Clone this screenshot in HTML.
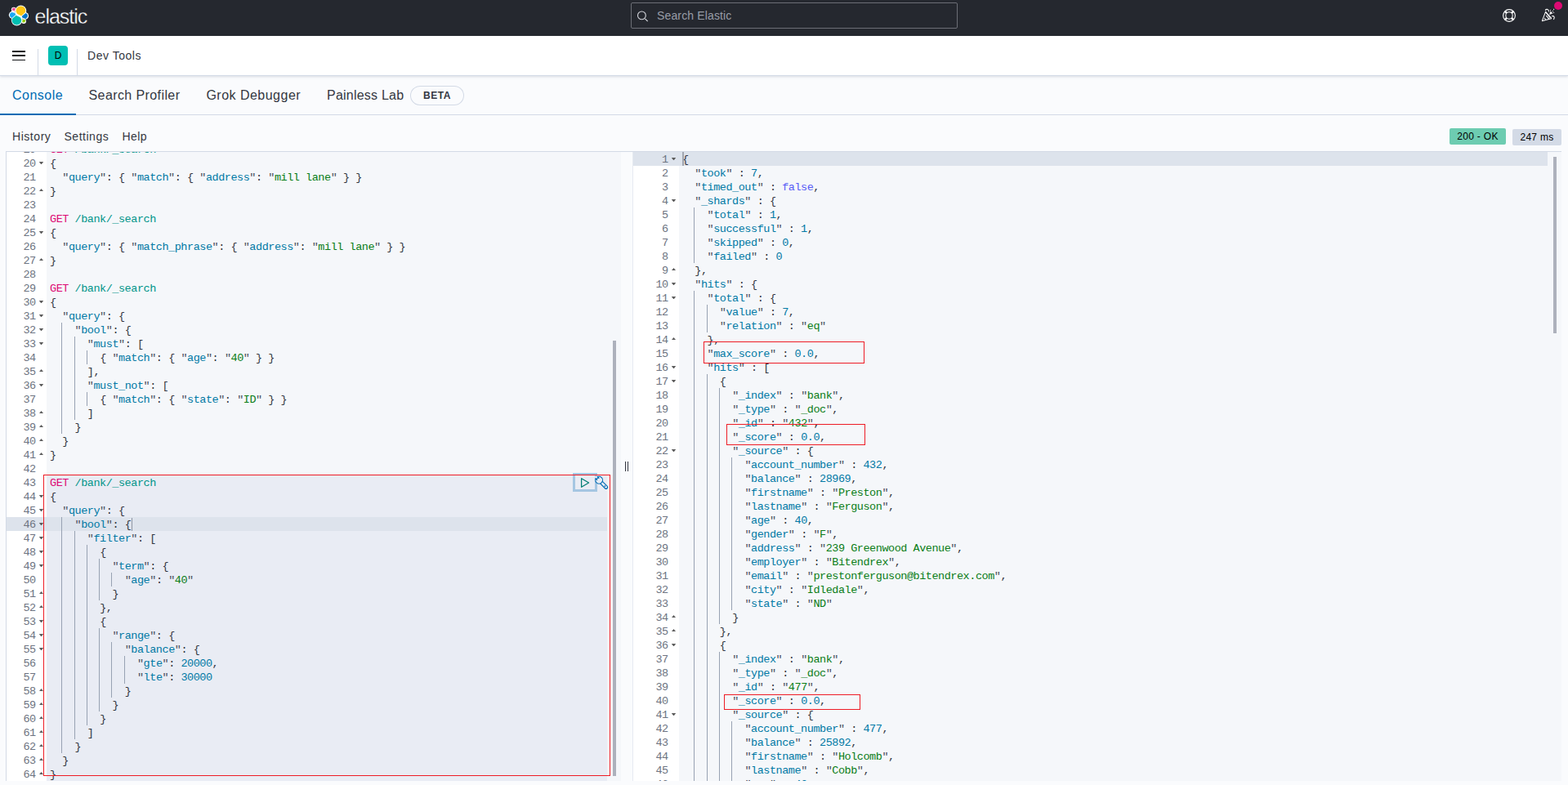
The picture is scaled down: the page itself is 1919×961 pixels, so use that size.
<!DOCTYPE html>
<html lang="en">
<head>
<meta charset="utf-8">
<title>Dev Tools - Console - Elastic</title>
<style>
*{box-sizing:border-box;margin:0;padding:0}
html,body{width:1919px;height:961px;overflow:hidden;background:#fafbfd}
body{position:relative;font-family:"Liberation Sans",sans-serif;color:#343741;font-size:14px}
.abs{position:absolute}
/* top dark header */
.hdr{position:absolute;left:0;top:0;width:1919px;height:44px;background:#25282f}
.logo{position:absolute;left:0;top:0}
.wordmark{position:absolute;left:42.6px;top:5px;height:30px;line-height:30px;font-size:25px;letter-spacing:-1.05px;color:#fff;white-space:nowrap;-webkit-text-stroke:.35px #25282f}
.search{position:absolute;left:772px;top:3px;width:400px;height:32px;border:1px solid #6c6e76;border-radius:2px;background:#25282f}
.search svg{position:absolute;left:6px;top:8px}
.search span{position:absolute;left:31px;top:0;height:30px;line-height:30px;font-size:14px;letter-spacing:.14px;color:#989da8;white-space:nowrap}
.hicon{position:absolute}
.dot{position:absolute;left:1901.7px;top:1.6px;width:10.6px;height:10.6px;border-radius:50%;background:#dd0a73}
/* second bar */
.bar{position:absolute;left:0;top:44px;width:1919px;height:48px;background:#fff;box-shadow:0 1px 0 #d3dae6,0 2px 3px rgba(152,162,179,.35)}
.bar .sep{position:absolute;top:16px;width:1px;height:32px;background:#d3dae6}
.burger{position:absolute;left:15px;top:17px;width:16px;height:14px}
.burger i{position:absolute;left:0;width:16px;height:1.55px;background:#111317}
.avatar{position:absolute;left:59px;top:12px;width:24px;height:24px;border-radius:4px;background:#00bfb3;color:#000;font-size:12px;line-height:24px;text-align:center;font-weight:500}
.crumb{position:absolute;left:107px;top:12px;height:24px;line-height:24px;font-size:14px;letter-spacing:.53px;color:#343741;white-space:nowrap}
/* tabs */
.tabs{position:absolute;left:0;top:93px;width:1919px;height:48px;border-bottom:1px solid #d3dae6}
.tab{position:absolute;top:0;height:48px;line-height:47px;font-size:16px;color:#343741;white-space:nowrap}
.tab.sel{color:#006bb4}
.tabsel{position:absolute;left:0;top:46px;width:93px;height:2px;background:#006bb4}
.beta{position:absolute;left:502px;top:12px;width:66px;height:24px;border-radius:12px;box-shadow:inset 0 0 0 1px #d3dae6;font-size:12px;font-weight:700;letter-spacing:.5px;line-height:24px;text-align:center;color:#343741;padding-left:0}
/* toolbar */
.tool{position:absolute;top:156px;height:22px;line-height:22px;font-size:14px;color:#343741;white-space:nowrap}
.badge{position:absolute;height:20px;line-height:20px;font-size:12px;border-radius:2px;text-align:center;color:#000;white-space:nowrap;letter-spacing:.3px}
/* editors */
.edtop{position:absolute;left:7px;top:185px;width:1904px;height:1px;background:#d3dae6}
.ed{position:absolute;top:186px;height:770px;overflow:hidden;background:#f5f7fa;font-family:"Liberation Mono","DejaVu Sans Mono",monospace;font-size:13.5px;letter-spacing:-.4676px;line-height:17px;color:#343741}
.ed .gut{position:absolute;left:0;top:0;height:770px;background:#fff;color:#6d7481}
.ed .code{position:absolute;top:0;height:770px;overflow:hidden}
.gl{position:absolute;left:0;width:100%;height:17px}
.gl .ln{position:absolute;right:13.3px;top:1px;height:17px;white-space:pre}
.gl i{position:absolute;right:3.6px;width:5.8px;height:3.6px;background:#5c5c5c}
.gl i.fo{top:6.8px;clip-path:polygon(0 0,100% 0,50% 100%)}
.gl i.fc{top:5.9px;clip-path:polygon(0 100%,100% 100%,50% 0)}
.cl{position:absolute;left:0;width:100%;height:17px;padding:1px 0 0 4px;white-space:pre}
.act{background:#dde3ec}
.ig{background:linear-gradient(#98a2b3,#98a2b3) no-repeat right top/1px 100%}
.ig,.ng{display:inline-block;height:17px;vertical-align:top;position:relative;top:-1px}
.q{color:#4a4f5c}.m{color:#dd0a73}.u{color:#01958a}.k{color:#0079a5}.s{color:#0a7d17}.n{color:#0079a5}.b{color:#585cf6}
.sb{position:absolute;width:4px;background:#adb1bc}
.hl{position:absolute;background:#e9ecf4}
.red{position:absolute;border:1px solid #ee1c25;pointer-events:none}
.grip{position:absolute;left:765px;top:565px;width:4.4px;height:12px;border-left:1.3px solid #343741;border-right:1.3px solid #343741}
.runbox{position:absolute;left:701px;top:579px;width:30px;height:23px;border:3px solid #a5c6e2}
</style>
</head>
<body>
<div class="hdr">
  <svg class="logo" width="48" height="44" viewBox="0 0 48 44" aria-label="Elastic logo">
    <g fill="#fff"><circle cx="25.5" cy="13.3" r="6.75"/><circle cx="20.5" cy="24.7" r="6.7"/><circle cx="16.9" cy="11.9" r="3.05"/><circle cx="15.3" cy="18.3" r="4.45"/><circle cx="30.6" cy="19.4" r="4.45"/><circle cx="29" cy="26" r="3.05"/><circle cx="23" cy="19" r="6"/></g>
    <path fill="#fec514" d="M25.5 7.4a5.9 5.9 0 0 1 5.6 7.7l-5 4.3-5-2.3-1.4-2.6a5.9 5.9 0 0 1 5.8-7.1z"/>
    <path fill="#00bfb3" d="M20.5 30.6a5.9 5.9 0 0 1-5.7-7.5l4.9-4.3 5.1 2.4 1.4 2.5a5.9 5.9 0 0 1-5.7 6.9z"/>
    <path fill="#f04e98" d="M14.9 12.6a2.3 2.3 0 0 1 3.9-2.3l-.5 3.3z"/>
    <path fill="#1ba9f5" d="M14.6 14.9l3.7 1 1 2.1-4.5 3.9a3.6 3.6 0 0 1-.2-7z"/>
    <path fill="#0077cc" d="M31.4 15.9a3.7 3.7 0 0 1 .1 7l-3.7-.9-1.1-2.1z"/>
    <path fill="#93c90e" d="M27.700 23.6l3.400.8a2.300 2.300 0 0 1-3.900 2.300z"/>
  </svg>
  <div class="wordmark">elastic</div>
  <div class="search">
    <svg width="16" height="16" viewBox="0 0 16 16"><circle cx="6.4" cy="6.9" r="4.9" fill="none" stroke="#d4d6dc" stroke-width="1.1"/><path d="M10.4 10.8l3.3 3.4" stroke="#d4d6dc" stroke-width="1.2" fill="none"/></svg>
    <span>Search Elastic</span>
  </div>
  <svg class="hicon" style="left:1839px;top:11px" width="16" height="16" viewBox="0 0 16 16" fill="none" stroke="#fff" stroke-width="1.1"><circle cx="8" cy="8" r="7.4"/><circle cx="8" cy="8" r="4.2"/><path d="M2.6 2.6l2.5 2.5M13.4 2.6l-2.5 2.5M2.6 13.4l2.5-2.5M13.4 13.4l-2.5-2.5" stroke-width="2.6"/></svg>
  <svg class="hicon" style="left:1880px;top:0" width="39" height="30" viewBox="0 0 39 30" fill="none" stroke="#fff" stroke-width="1.05" stroke-linejoin="round" stroke-linecap="round"><path d="M11.6 14.4L7.5 25.1Q7.3 25.8 8 25.6L18.3 22.8Q18.9 22.5 18.5 22z"/><path d="M12.5 19.3l3.3 3.9M10.4 22.3l1 1.2M12.6 16.2l4.6 5.6"/><path d="M11.4 12.4c1.2-1.7 4-1.3 4.1 1.5"/><path d="M17.6 14.3l-1 3.2 3.2-1.2z" fill="#fff" stroke-width=".6"/><path d="M19.6 19.8c2-.6 3.6.9 2 3.8"/><g fill="#fff" stroke="none"><circle cx="17.5" cy="12.5" r=".6"/><circle cx="21.6" cy="11.4" r=".6"/><circle cx="20.5" cy="13.6" r=".6"/><circle cx="21.6" cy="15.5" r=".6"/></g></svg>
  <div class="dot"></div>
</div>
<div class="bar">
  <div class="burger"><i style="top:1.2px"></i><i style="top:6.45px"></i><i style="top:11.5px"></i></div>
  <div class="sep" style="left:46px"></div>
  <div class="avatar">D</div>
  <div class="sep" style="left:94px"></div>
  <div class="crumb">Dev Tools</div>
</div>
<div class="tabs">
  <div class="tab sel" style="left:15px;letter-spacing:.48px">Console</div>
  <div class="tab" style="left:108.5px;letter-spacing:.405px">Search Profiler</div>
  <div class="tab" style="left:252.4px;letter-spacing:.485px">Grok Debugger</div>
  <div class="tab" style="left:400px;letter-spacing:.22px">Painless Lab</div>
  <div class="beta">BETA</div>
  <div class="tabsel"></div>
</div>
<div class="tool" style="left:15px;letter-spacing:.55px">History</div>
<div class="tool" style="left:78.5px;letter-spacing:.52px">Settings</div>
<div class="tool" style="left:149.5px;letter-spacing:.4px">Help</div>
<div class="badge" style="left:1774px;top:157px;width:69px;background:#6dccb1">200 - OK</div>
<div class="badge" style="left:1851px;top:158px;width:60px;background:#d3dae6">247 ms</div>

<div class="edtop"></div>
<!-- request editor -->
<div class="ed" style="left:7px;width:753px;border-left:1px solid #d3dae6">
  <div class="hl" style="left:49px;top:396px;width:686px;height:374px"></div>
  <div class="gut" style="width:49px">
<div class="gl" style="top:-12px"><span class="ln">19</span></div>
<div class="gl" style="top:5px"><span class="ln">20</span><i class="fo"></i></div>
<div class="gl" style="top:22px"><span class="ln">21</span></div>
<div class="gl" style="top:39px"><span class="ln">22</span><i class="fc"></i></div>
<div class="gl" style="top:56px"><span class="ln">23</span></div>
<div class="gl" style="top:73px"><span class="ln">24</span></div>
<div class="gl" style="top:90px"><span class="ln">25</span><i class="fo"></i></div>
<div class="gl" style="top:107px"><span class="ln">26</span></div>
<div class="gl" style="top:124px"><span class="ln">27</span><i class="fc"></i></div>
<div class="gl" style="top:141px"><span class="ln">28</span></div>
<div class="gl" style="top:158px"><span class="ln">29</span></div>
<div class="gl" style="top:175px"><span class="ln">30</span><i class="fo"></i></div>
<div class="gl" style="top:192px"><span class="ln">31</span><i class="fo"></i></div>
<div class="gl" style="top:209px"><span class="ln">32</span><i class="fo"></i></div>
<div class="gl" style="top:226px"><span class="ln">33</span><i class="fo"></i></div>
<div class="gl" style="top:243px"><span class="ln">34</span></div>
<div class="gl" style="top:260px"><span class="ln">35</span><i class="fc"></i></div>
<div class="gl" style="top:277px"><span class="ln">36</span><i class="fo"></i></div>
<div class="gl" style="top:294px"><span class="ln">37</span></div>
<div class="gl" style="top:311px"><span class="ln">38</span><i class="fc"></i></div>
<div class="gl" style="top:328px"><span class="ln">39</span><i class="fc"></i></div>
<div class="gl" style="top:345px"><span class="ln">40</span><i class="fc"></i></div>
<div class="gl" style="top:362px"><span class="ln">41</span><i class="fc"></i></div>
<div class="gl" style="top:379px"><span class="ln">42</span></div>
<div class="gl" style="top:396px"><span class="ln">43</span></div>
<div class="gl" style="top:413px"><span class="ln">44</span><i class="fo"></i></div>
<div class="gl" style="top:430px"><span class="ln">45</span><i class="fo"></i></div>
<div class="gl act" style="top:447px"><span class="ln">46</span><i class="fo"></i></div>
<div class="gl" style="top:464px"><span class="ln">47</span><i class="fo"></i></div>
<div class="gl" style="top:481px"><span class="ln">48</span><i class="fo"></i></div>
<div class="gl" style="top:498px"><span class="ln">49</span><i class="fo"></i></div>
<div class="gl" style="top:515px"><span class="ln">50</span></div>
<div class="gl" style="top:532px"><span class="ln">51</span><i class="fc"></i></div>
<div class="gl" style="top:549px"><span class="ln">52</span><i class="fc"></i></div>
<div class="gl" style="top:566px"><span class="ln">53</span><i class="fo"></i></div>
<div class="gl" style="top:583px"><span class="ln">54</span><i class="fo"></i></div>
<div class="gl" style="top:600px"><span class="ln">55</span><i class="fo"></i></div>
<div class="gl" style="top:617px"><span class="ln">56</span></div>
<div class="gl" style="top:634px"><span class="ln">57</span></div>
<div class="gl" style="top:651px"><span class="ln">58</span><i class="fc"></i></div>
<div class="gl" style="top:668px"><span class="ln">59</span><i class="fc"></i></div>
<div class="gl" style="top:685px"><span class="ln">60</span><i class="fc"></i></div>
<div class="gl" style="top:702px"><span class="ln">61</span><i class="fc"></i></div>
<div class="gl" style="top:719px"><span class="ln">62</span><i class="fc"></i></div>
<div class="gl" style="top:736px"><span class="ln">63</span><i class="fc"></i></div>
<div class="gl" style="top:753px"><span class="ln">64</span><i class="fc"></i></div>
  </div>
  <div class="code" style="left:49px;width:686px">
<div class="cl" style="top:-12px"><span class="m">GET</span> <span class="u">/bank/_search</span></div>
<div class="cl" style="top:5px">{</div>
<div class="cl" style="top:22px"><span class="ng">  </span><span class="q">"</span><span class="k">query</span><span class="q">"</span>: { <span class="q">"</span><span class="k">match</span><span class="q">"</span>: { <span class="q">"</span><span class="k">address</span><span class="q">"</span>: <span class="q">"</span><span class="s">mill lane</span><span class="q">"</span> } }</div>
<div class="cl" style="top:39px">}</div>
<div class="cl" style="top:56px"></div>
<div class="cl" style="top:73px"><span class="m">GET</span> <span class="u">/bank/_search</span></div>
<div class="cl" style="top:90px">{</div>
<div class="cl" style="top:107px"><span class="ng">  </span><span class="q">"</span><span class="k">query</span><span class="q">"</span>: { <span class="q">"</span><span class="k">match_phrase</span><span class="q">"</span>: { <span class="q">"</span><span class="k">address</span><span class="q">"</span>: <span class="q">"</span><span class="s">mill lane</span><span class="q">"</span> } }</div>
<div class="cl" style="top:124px">}</div>
<div class="cl" style="top:141px"></div>
<div class="cl" style="top:158px"><span class="m">GET</span> <span class="u">/bank/_search</span></div>
<div class="cl" style="top:175px">{</div>
<div class="cl" style="top:192px"><span class="ng">  </span><span class="q">"</span><span class="k">query</span><span class="q">"</span>: {</div>
<div class="cl" style="top:209px"><span class="ig">  </span><span class="ng">  </span><span class="q">"</span><span class="k">bool</span><span class="q">"</span>: {</div>
<div class="cl" style="top:226px"><span class="ig">  </span><span class="ig">  </span><span class="ng">  </span><span class="q">"</span><span class="k">must</span><span class="q">"</span>: [</div>
<div class="cl" style="top:243px"><span class="ig">  </span><span class="ig">  </span><span class="ig">  </span><span class="ng">  </span>{ <span class="q">"</span><span class="k">match</span><span class="q">"</span>: { <span class="q">"</span><span class="k">age</span><span class="q">"</span>: <span class="q">"</span><span class="s">40</span><span class="q">"</span> } }</div>
<div class="cl" style="top:260px"><span class="ig">  </span><span class="ig">  </span><span class="ng">  </span>],</div>
<div class="cl" style="top:277px"><span class="ig">  </span><span class="ig">  </span><span class="ng">  </span><span class="q">"</span><span class="k">must_not</span><span class="q">"</span>: [</div>
<div class="cl" style="top:294px"><span class="ig">  </span><span class="ig">  </span><span class="ig">  </span><span class="ng">  </span>{ <span class="q">"</span><span class="k">match</span><span class="q">"</span>: { <span class="q">"</span><span class="k">state</span><span class="q">"</span>: <span class="q">"</span><span class="s">ID</span><span class="q">"</span> } }</div>
<div class="cl" style="top:311px"><span class="ig">  </span><span class="ig">  </span><span class="ng">  </span>]</div>
<div class="cl" style="top:328px"><span class="ig">  </span><span class="ng">  </span>}</div>
<div class="cl" style="top:345px"><span class="ng">  </span>}</div>
<div class="cl" style="top:362px">}</div>
<div class="cl" style="top:379px"></div>
<div class="cl" style="top:396px"><span class="m">GET</span> <span class="u">/bank/_search</span></div>
<div class="cl" style="top:413px">{</div>
<div class="cl" style="top:430px"><span class="ng">  </span><span class="q">"</span><span class="k">query</span><span class="q">"</span>: {</div>
<div class="cl act" style="top:447px"><span class="ig">  </span><span class="ng">  </span><span class="q">"</span><span class="k">bool</span><span class="q">"</span>: {</div>
<div class="cl" style="top:464px"><span class="ig">  </span><span class="ig">  </span><span class="ng">  </span><span class="q">"</span><span class="k">filter</span><span class="q">"</span>: [</div>
<div class="cl" style="top:481px"><span class="ig">  </span><span class="ig">  </span><span class="ig">  </span><span class="ng">  </span>{</div>
<div class="cl" style="top:498px"><span class="ig">  </span><span class="ig">  </span><span class="ig">  </span><span class="ig">  </span><span class="ng">  </span><span class="q">"</span><span class="k">term</span><span class="q">"</span>: {</div>
<div class="cl" style="top:515px"><span class="ig">  </span><span class="ig">  </span><span class="ig">  </span><span class="ig">  </span><span class="ig">  </span><span class="ng">  </span><span class="q">"</span><span class="k">age</span><span class="q">"</span>: <span class="q">"</span><span class="s">40</span><span class="q">"</span></div>
<div class="cl" style="top:532px"><span class="ig">  </span><span class="ig">  </span><span class="ig">  </span><span class="ig">  </span><span class="ng">  </span>}</div>
<div class="cl" style="top:549px"><span class="ig">  </span><span class="ig">  </span><span class="ig">  </span><span class="ng">  </span>},</div>
<div class="cl" style="top:566px"><span class="ig">  </span><span class="ig">  </span><span class="ig">  </span><span class="ng">  </span>{</div>
<div class="cl" style="top:583px"><span class="ig">  </span><span class="ig">  </span><span class="ig">  </span><span class="ig">  </span><span class="ng">  </span><span class="q">"</span><span class="k">range</span><span class="q">"</span>: {</div>
<div class="cl" style="top:600px"><span class="ig">  </span><span class="ig">  </span><span class="ig">  </span><span class="ig">  </span><span class="ig">  </span><span class="ng">  </span><span class="q">"</span><span class="k">balance</span><span class="q">"</span>: {</div>
<div class="cl" style="top:617px"><span class="ig">  </span><span class="ig">  </span><span class="ig">  </span><span class="ig">  </span><span class="ig">  </span><span class="ig">  </span><span class="ng">  </span><span class="q">"</span><span class="k">gte</span><span class="q">"</span>: <span class="n">20000</span>,</div>
<div class="cl" style="top:634px"><span class="ig">  </span><span class="ig">  </span><span class="ig">  </span><span class="ig">  </span><span class="ig">  </span><span class="ig">  </span><span class="ng">  </span><span class="q">"</span><span class="k">lte</span><span class="q">"</span>: <span class="n">30000</span></div>
<div class="cl" style="top:651px"><span class="ig">  </span><span class="ig">  </span><span class="ig">  </span><span class="ig">  </span><span class="ig">  </span><span class="ng">  </span>}</div>
<div class="cl" style="top:668px"><span class="ig">  </span><span class="ig">  </span><span class="ig">  </span><span class="ig">  </span><span class="ng">  </span>}</div>
<div class="cl" style="top:685px"><span class="ig">  </span><span class="ig">  </span><span class="ig">  </span><span class="ng">  </span>}</div>
<div class="cl" style="top:702px"><span class="ig">  </span><span class="ig">  </span><span class="ng">  </span>]</div>
<div class="cl" style="top:719px"><span class="ig">  </span><span class="ng">  </span>}</div>
<div class="cl" style="top:736px"><span class="ng">  </span>}</div>
<div class="cl" style="top:753px">}</div>
  </div>
  <div class="abs" style="left:152.6px;top:448px;width:1.5px;height:16px;background:#9096a3"></div>
  <div class="sb" style="left:742px;top:231px;height:533px"></div>
</div>
<div class="runbox"></div>
<div class="red" style="left:53px;top:581px;width:694px;height:369px"></div>
<svg class="abs" style="left:709px;top:583px" width="16" height="16" viewBox="0 0 16 16" fill="none" stroke="#017d73" stroke-width="1.25" stroke-linejoin="round"><path d="M2.6 2.7v10.6L11.6 8z"/></svg>
<svg class="abs" style="left:727px;top:582px" width="20" height="20" viewBox="0 0 20 20" fill="#e9ecf4" stroke="#006bb4" stroke-width="1.15" stroke-linecap="round" stroke-linejoin="round"><g transform="translate(6.1 5.8) rotate(45)"><rect x="0" y="-1.85" width="14.1" height="3.7" rx="1.85"/><circle cx="0" cy="0" r="4.4"/><path d="M-6 -1.5L-1 0L-6 1.5z" stroke="none"/><path d="M-4.1 -1.7L-1.9 -1.7A1.8 1.8 0 0 0 -1.9 1.7L-4.1 1.7" fill="none"/><circle cx="10.3" cy="0" r=".85" fill="#006bb4" stroke="none"/></g></svg>
<div class="grip"></div>
<!-- response editor -->
<div class="ed" style="left:774px;width:1137px;border-left:1px solid #e6eaf1">
  <div class="gut" style="width:56px">
<div class="gl act" style="top:0px"><span class="ln">1</span><i class="fo"></i></div>
<div class="gl" style="top:17px"><span class="ln">2</span></div>
<div class="gl" style="top:34px"><span class="ln">3</span></div>
<div class="gl" style="top:51px"><span class="ln">4</span><i class="fo"></i></div>
<div class="gl" style="top:68px"><span class="ln">5</span></div>
<div class="gl" style="top:85px"><span class="ln">6</span></div>
<div class="gl" style="top:102px"><span class="ln">7</span></div>
<div class="gl" style="top:119px"><span class="ln">8</span></div>
<div class="gl" style="top:136px"><span class="ln">9</span><i class="fc"></i></div>
<div class="gl" style="top:153px"><span class="ln">10</span><i class="fo"></i></div>
<div class="gl" style="top:170px"><span class="ln">11</span><i class="fo"></i></div>
<div class="gl" style="top:187px"><span class="ln">12</span></div>
<div class="gl" style="top:204px"><span class="ln">13</span></div>
<div class="gl" style="top:221px"><span class="ln">14</span><i class="fc"></i></div>
<div class="gl" style="top:238px"><span class="ln">15</span></div>
<div class="gl" style="top:255px"><span class="ln">16</span><i class="fo"></i></div>
<div class="gl" style="top:272px"><span class="ln">17</span><i class="fo"></i></div>
<div class="gl" style="top:289px"><span class="ln">18</span></div>
<div class="gl" style="top:306px"><span class="ln">19</span></div>
<div class="gl" style="top:323px"><span class="ln">20</span></div>
<div class="gl" style="top:340px"><span class="ln">21</span></div>
<div class="gl" style="top:357px"><span class="ln">22</span><i class="fo"></i></div>
<div class="gl" style="top:374px"><span class="ln">23</span></div>
<div class="gl" style="top:391px"><span class="ln">24</span></div>
<div class="gl" style="top:408px"><span class="ln">25</span></div>
<div class="gl" style="top:425px"><span class="ln">26</span></div>
<div class="gl" style="top:442px"><span class="ln">27</span></div>
<div class="gl" style="top:459px"><span class="ln">28</span></div>
<div class="gl" style="top:476px"><span class="ln">29</span></div>
<div class="gl" style="top:493px"><span class="ln">30</span></div>
<div class="gl" style="top:510px"><span class="ln">31</span></div>
<div class="gl" style="top:527px"><span class="ln">32</span></div>
<div class="gl" style="top:544px"><span class="ln">33</span></div>
<div class="gl" style="top:561px"><span class="ln">34</span><i class="fc"></i></div>
<div class="gl" style="top:578px"><span class="ln">35</span><i class="fc"></i></div>
<div class="gl" style="top:595px"><span class="ln">36</span><i class="fo"></i></div>
<div class="gl" style="top:612px"><span class="ln">37</span></div>
<div class="gl" style="top:629px"><span class="ln">38</span></div>
<div class="gl" style="top:646px"><span class="ln">39</span></div>
<div class="gl" style="top:663px"><span class="ln">40</span></div>
<div class="gl" style="top:680px"><span class="ln">41</span><i class="fo"></i></div>
<div class="gl" style="top:697px"><span class="ln">42</span></div>
<div class="gl" style="top:714px"><span class="ln">43</span></div>
<div class="gl" style="top:731px"><span class="ln">44</span></div>
<div class="gl" style="top:748px"><span class="ln">45</span></div>
<div class="gl" style="top:765px"><span class="ln">46</span></div>
  </div>
  <div class="code" style="left:56px;width:1063px">
<div class="cl act" style="top:0px">{</div>
<div class="cl" style="top:17px"><span class="ng">  </span><span class="q">"</span><span class="k">took</span><span class="q">"</span> : <span class="n">7</span>,</div>
<div class="cl" style="top:34px"><span class="ng">  </span><span class="q">"</span><span class="k">timed_out</span><span class="q">"</span> : <span class="b">false</span>,</div>
<div class="cl" style="top:51px"><span class="ng">  </span><span class="q">"</span><span class="k">_shards</span><span class="q">"</span> : {</div>
<div class="cl" style="top:68px"><span class="ig">  </span><span class="ng">  </span><span class="q">"</span><span class="k">total</span><span class="q">"</span> : <span class="n">1</span>,</div>
<div class="cl" style="top:85px"><span class="ig">  </span><span class="ng">  </span><span class="q">"</span><span class="k">successful</span><span class="q">"</span> : <span class="n">1</span>,</div>
<div class="cl" style="top:102px"><span class="ig">  </span><span class="ng">  </span><span class="q">"</span><span class="k">skipped</span><span class="q">"</span> : <span class="n">0</span>,</div>
<div class="cl" style="top:119px"><span class="ig">  </span><span class="ng">  </span><span class="q">"</span><span class="k">failed</span><span class="q">"</span> : <span class="n">0</span></div>
<div class="cl" style="top:136px"><span class="ng">  </span>},</div>
<div class="cl" style="top:153px"><span class="ng">  </span><span class="q">"</span><span class="k">hits</span><span class="q">"</span> : {</div>
<div class="cl" style="top:170px"><span class="ig">  </span><span class="ng">  </span><span class="q">"</span><span class="k">total</span><span class="q">"</span> : {</div>
<div class="cl" style="top:187px"><span class="ig">  </span><span class="ig">  </span><span class="ng">  </span><span class="q">"</span><span class="k">value</span><span class="q">"</span> : <span class="n">7</span>,</div>
<div class="cl" style="top:204px"><span class="ig">  </span><span class="ig">  </span><span class="ng">  </span><span class="q">"</span><span class="k">relation</span><span class="q">"</span> : <span class="q">"</span><span class="s">eq</span><span class="q">"</span></div>
<div class="cl" style="top:221px"><span class="ig">  </span><span class="ng">  </span>},</div>
<div class="cl" style="top:238px"><span class="ig">  </span><span class="ng">  </span><span class="q">"</span><span class="k">max_score</span><span class="q">"</span> : <span class="n">0.0</span>,</div>
<div class="cl" style="top:255px"><span class="ig">  </span><span class="ng">  </span><span class="q">"</span><span class="k">hits</span><span class="q">"</span> : [</div>
<div class="cl" style="top:272px"><span class="ig">  </span><span class="ig">  </span><span class="ng">  </span>{</div>
<div class="cl" style="top:289px"><span class="ig">  </span><span class="ig">  </span><span class="ig">  </span><span class="ng">  </span><span class="q">"</span><span class="k">_index</span><span class="q">"</span> : <span class="q">"</span><span class="s">bank</span><span class="q">"</span>,</div>
<div class="cl" style="top:306px"><span class="ig">  </span><span class="ig">  </span><span class="ig">  </span><span class="ng">  </span><span class="q">"</span><span class="k">_type</span><span class="q">"</span> : <span class="q">"</span><span class="s">_doc</span><span class="q">"</span>,</div>
<div class="cl" style="top:323px"><span class="ig">  </span><span class="ig">  </span><span class="ig">  </span><span class="ng">  </span><span class="q">"</span><span class="k">_id</span><span class="q">"</span> : <span class="q">"</span><span class="s">432</span><span class="q">"</span>,</div>
<div class="cl" style="top:340px"><span class="ig">  </span><span class="ig">  </span><span class="ig">  </span><span class="ng">  </span><span class="q">"</span><span class="k">_score</span><span class="q">"</span> : <span class="n">0.0</span>,</div>
<div class="cl" style="top:357px"><span class="ig">  </span><span class="ig">  </span><span class="ig">  </span><span class="ng">  </span><span class="q">"</span><span class="k">_source</span><span class="q">"</span> : {</div>
<div class="cl" style="top:374px"><span class="ig">  </span><span class="ig">  </span><span class="ig">  </span><span class="ig">  </span><span class="ng">  </span><span class="q">"</span><span class="k">account_number</span><span class="q">"</span> : <span class="n">432</span>,</div>
<div class="cl" style="top:391px"><span class="ig">  </span><span class="ig">  </span><span class="ig">  </span><span class="ig">  </span><span class="ng">  </span><span class="q">"</span><span class="k">balance</span><span class="q">"</span> : <span class="n">28969</span>,</div>
<div class="cl" style="top:408px"><span class="ig">  </span><span class="ig">  </span><span class="ig">  </span><span class="ig">  </span><span class="ng">  </span><span class="q">"</span><span class="k">firstname</span><span class="q">"</span> : <span class="q">"</span><span class="s">Preston</span><span class="q">"</span>,</div>
<div class="cl" style="top:425px"><span class="ig">  </span><span class="ig">  </span><span class="ig">  </span><span class="ig">  </span><span class="ng">  </span><span class="q">"</span><span class="k">lastname</span><span class="q">"</span> : <span class="q">"</span><span class="s">Ferguson</span><span class="q">"</span>,</div>
<div class="cl" style="top:442px"><span class="ig">  </span><span class="ig">  </span><span class="ig">  </span><span class="ig">  </span><span class="ng">  </span><span class="q">"</span><span class="k">age</span><span class="q">"</span> : <span class="n">40</span>,</div>
<div class="cl" style="top:459px"><span class="ig">  </span><span class="ig">  </span><span class="ig">  </span><span class="ig">  </span><span class="ng">  </span><span class="q">"</span><span class="k">gender</span><span class="q">"</span> : <span class="q">"</span><span class="s">F</span><span class="q">"</span>,</div>
<div class="cl" style="top:476px"><span class="ig">  </span><span class="ig">  </span><span class="ig">  </span><span class="ig">  </span><span class="ng">  </span><span class="q">"</span><span class="k">address</span><span class="q">"</span> : <span class="q">"</span><span class="s">239 Greenwood Avenue</span><span class="q">"</span>,</div>
<div class="cl" style="top:493px"><span class="ig">  </span><span class="ig">  </span><span class="ig">  </span><span class="ig">  </span><span class="ng">  </span><span class="q">"</span><span class="k">employer</span><span class="q">"</span> : <span class="q">"</span><span class="s">Bitendrex</span><span class="q">"</span>,</div>
<div class="cl" style="top:510px"><span class="ig">  </span><span class="ig">  </span><span class="ig">  </span><span class="ig">  </span><span class="ng">  </span><span class="q">"</span><span class="k">email</span><span class="q">"</span> : <span class="q">"</span><span class="s">prestonferguson@bitendrex.com</span><span class="q">"</span>,</div>
<div class="cl" style="top:527px"><span class="ig">  </span><span class="ig">  </span><span class="ig">  </span><span class="ig">  </span><span class="ng">  </span><span class="q">"</span><span class="k">city</span><span class="q">"</span> : <span class="q">"</span><span class="s">Idledale</span><span class="q">"</span>,</div>
<div class="cl" style="top:544px"><span class="ig">  </span><span class="ig">  </span><span class="ig">  </span><span class="ig">  </span><span class="ng">  </span><span class="q">"</span><span class="k">state</span><span class="q">"</span> : <span class="q">"</span><span class="s">ND</span><span class="q">"</span></div>
<div class="cl" style="top:561px"><span class="ig">  </span><span class="ig">  </span><span class="ig">  </span><span class="ng">  </span>}</div>
<div class="cl" style="top:578px"><span class="ig">  </span><span class="ig">  </span><span class="ng">  </span>},</div>
<div class="cl" style="top:595px"><span class="ig">  </span><span class="ig">  </span><span class="ng">  </span>{</div>
<div class="cl" style="top:612px"><span class="ig">  </span><span class="ig">  </span><span class="ig">  </span><span class="ng">  </span><span class="q">"</span><span class="k">_index</span><span class="q">"</span> : <span class="q">"</span><span class="s">bank</span><span class="q">"</span>,</div>
<div class="cl" style="top:629px"><span class="ig">  </span><span class="ig">  </span><span class="ig">  </span><span class="ng">  </span><span class="q">"</span><span class="k">_type</span><span class="q">"</span> : <span class="q">"</span><span class="s">_doc</span><span class="q">"</span>,</div>
<div class="cl" style="top:646px"><span class="ig">  </span><span class="ig">  </span><span class="ig">  </span><span class="ng">  </span><span class="q">"</span><span class="k">_id</span><span class="q">"</span> : <span class="q">"</span><span class="s">477</span><span class="q">"</span>,</div>
<div class="cl" style="top:663px"><span class="ig">  </span><span class="ig">  </span><span class="ig">  </span><span class="ng">  </span><span class="q">"</span><span class="k">_score</span><span class="q">"</span> : <span class="n">0.0</span>,</div>
<div class="cl" style="top:680px"><span class="ig">  </span><span class="ig">  </span><span class="ig">  </span><span class="ng">  </span><span class="q">"</span><span class="k">_source</span><span class="q">"</span> : {</div>
<div class="cl" style="top:697px"><span class="ig">  </span><span class="ig">  </span><span class="ig">  </span><span class="ig">  </span><span class="ng">  </span><span class="q">"</span><span class="k">account_number</span><span class="q">"</span> : <span class="n">477</span>,</div>
<div class="cl" style="top:714px"><span class="ig">  </span><span class="ig">  </span><span class="ig">  </span><span class="ig">  </span><span class="ng">  </span><span class="q">"</span><span class="k">balance</span><span class="q">"</span> : <span class="n">25892</span>,</div>
<div class="cl" style="top:731px"><span class="ig">  </span><span class="ig">  </span><span class="ig">  </span><span class="ig">  </span><span class="ng">  </span><span class="q">"</span><span class="k">firstname</span><span class="q">"</span> : <span class="q">"</span><span class="s">Holcomb</span><span class="q">"</span>,</div>
<div class="cl" style="top:748px"><span class="ig">  </span><span class="ig">  </span><span class="ig">  </span><span class="ig">  </span><span class="ng">  </span><span class="q">"</span><span class="k">lastname</span><span class="q">"</span> : <span class="q">"</span><span class="s">Cobb</span><span class="q">"</span>,</div>
<div class="cl" style="top:765px"><span class="ig">  </span><span class="ig">  </span><span class="ig">  </span><span class="ig">  </span><span class="ng">  </span><span class="q">"</span><span class="k">age</span><span class="q">"</span> : <span class="n">40</span>,</div>
  </div>
  <div class="abs" style="left:60px;top:0;width:2px;height:17px;background:#a2a6b0"></div>
  <div class="sb" style="left:1126px;top:6px;height:216px"></div>
</div>
<div class="red" style="left:861px;top:418px;width:197px;height:27px"></div>
<div class="red" style="left:889px;top:519px;width:170px;height:26px"></div>
<div class="red" style="left:886px;top:850px;width:167px;height:19px"></div>
</body>
</html>
